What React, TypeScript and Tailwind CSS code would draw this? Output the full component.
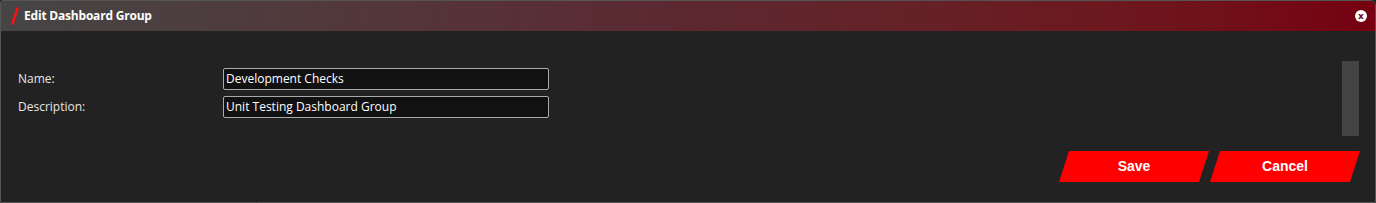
import React from "react";

export default function App() {
  return (
    <div className="w-[1376px] h-[203px] bg-[#222222] overflow-hidden" style={{ fontFamily: '"Open Sans", "Noto Sans", sans-serif' }}>
      <div className="h-full flex flex-col border border-[#555555] rounded-tr-[6px] rounded-tl-[3px] overflow-hidden">
        <div className="h-[30px] shrink-0 flex items-center bg-gradient-to-r from-[#454545] via-[#5c2830] to-[#760010] pl-[10px] pr-[8px]">
          <svg width="8" height="18" viewBox="0 0 8 18" className="mr-[5px]">
            <line x1="6.8" y1="0.5" x2="1.2" y2="17.5" stroke="#ff1010" strokeWidth="2.4" />
          </svg>
          <span className="text-white font-bold text-[12px] tracking-[-0.2px]">Edit Dashboard Group</span>
          <div className="ml-auto w-[12px] h-[12px] rounded-full bg-white flex items-center justify-center">
            <span className="text-[#760010] font-bold text-[9px] leading-none" style={{ fontFamily: '"DejaVu Sans", sans-serif' }}>x</span>
          </div>
        </div>
        <div className="flex flex-1 pl-[17px] pr-[16px]">
          <div className="flex-1 pt-[37px] flex flex-col gap-[6px]">
            <div className="flex items-center h-[22px]">
              <label className="w-[205px] text-[12px] text-[#e6e6e6]">Name:</label>
              <div className="w-[326px] h-[22px] bg-[#111111] border border-[#aaaaaa] rounded-[2px] text-[12px] text-white px-[2px] flex items-center">Development Checks</div>
            </div>
            <div className="flex items-center h-[22px]">
              <label className="w-[205px] text-[12px] text-[#e6e6e6]">Description:</label>
              <div className="w-[326px] h-[22px] bg-[#111111] border border-[#aaaaaa] rounded-[2px] text-[12px] text-white px-[2px] flex items-center">Unit Testing Dashboard Group</div>
            </div>
          </div>
          <div className="flex flex-col items-end">
            <div className="mt-[30px] w-[17px] h-[75px] bg-[#444444]" />
            <div className="mt-[15px] flex gap-[1px] -mr-[1px]">
              <button className="w-[150px] h-[31px] bg-[#ff0000] text-white font-bold text-[14px] [clip-path:polygon(10px_0,100%_0,calc(100%-10px)_100%,0_100%)]" style={{ fontFamily: '"Liberation Sans", Arial, sans-serif' }}>Save</button>
              <button className="w-[150px] h-[31px] bg-[#ff0000] text-white font-bold text-[14px] [clip-path:polygon(10px_0,100%_0,calc(100%-10px)_100%,0_100%)]" style={{ fontFamily: '"Liberation Sans", Arial, sans-serif' }}>Cancel</button>
            </div>
          </div>
        </div>
      </div>
    </div>
  );
}
